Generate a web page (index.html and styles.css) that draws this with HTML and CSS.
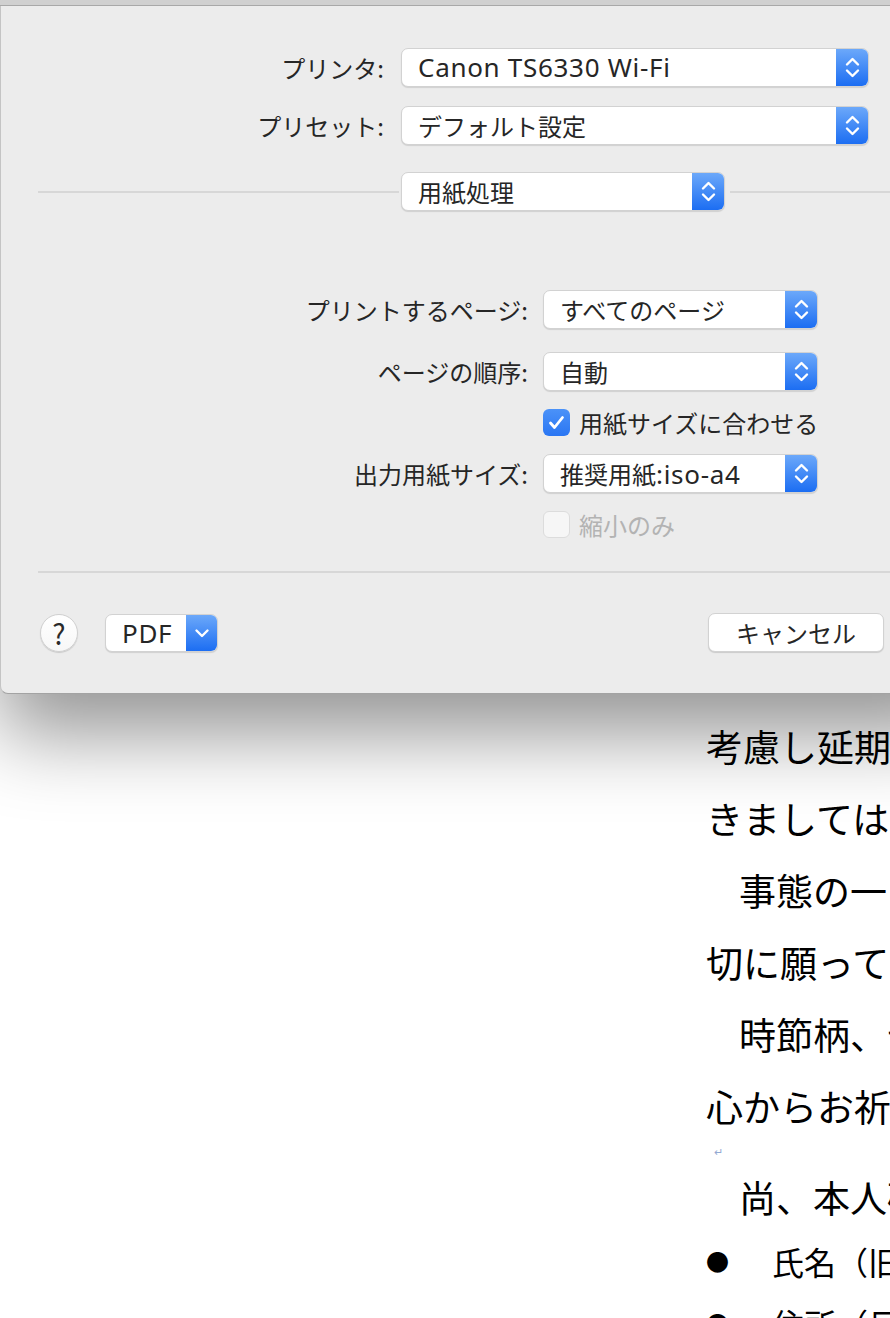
FILE: index.html
```html
<!DOCTYPE html>
<html lang="ja">
<head>
<meta charset="utf-8">
<title>プリント</title>
<link rel="stylesheet" href="styles.css">
</head>
<body>
<div class="topbar"></div>
<div class="sheet">
  <div class="grid top-grid">
    <div class="lbl">プリンタ:</div>
    <div class="popup"><span class="val lat">Canon TS6330 Wi-Fi</span><span class="arrows"><svg width="33" height="39" viewBox="0 0 33 39"><path d="M11 16.5 L16.5 11 L22 16.5 M11 22.5 L16.5 28 L22 22.5" fill="none" stroke="#fff" stroke-width="2.4" stroke-linecap="round" stroke-linejoin="round"/></svg></span></div>
    <div class="lbl">プリセット:</div>
    <div class="popup"><span class="val">デフォルト設定</span><span class="arrows"><svg width="33" height="39" viewBox="0 0 33 39"><path d="M11 16.5 L16.5 11 L22 16.5 M11 22.5 L16.5 28 L22 22.5" fill="none" stroke="#fff" stroke-width="2.4" stroke-linecap="round" stroke-linejoin="round"/></svg></span></div>
  </div>
  <div class="divider-row">
    <div class="line left"></div>
    <div class="popup mid"><span class="val">用紙処理</span><span class="arrows"><svg width="33" height="39" viewBox="0 0 33 39"><path d="M11 16.5 L16.5 11 L22 16.5 M11 22.5 L16.5 28 L22 22.5" fill="none" stroke="#fff" stroke-width="2.4" stroke-linecap="round" stroke-linejoin="round"/></svg></span></div>
    <div class="line right"></div>
  </div>
  <div class="grid opt-grid">
    <div class="lbl">プリントするページ:</div>
    <div class="popup"><span class="val">すべてのページ</span><span class="arrows"><svg width="33" height="39" viewBox="0 0 33 39"><path d="M11 16.5 L16.5 11 L22 16.5 M11 22.5 L16.5 28 L22 22.5" fill="none" stroke="#fff" stroke-width="2.4" stroke-linecap="round" stroke-linejoin="round"/></svg></span></div>
    <div class="lbl r2">ページの順序:</div>
    <div class="popup r2"><span class="val">自動</span><span class="arrows"><svg width="33" height="39" viewBox="0 0 33 39"><path d="M11 16.5 L16.5 11 L22 16.5 M11 22.5 L16.5 28 L22 22.5" fill="none" stroke="#fff" stroke-width="2.4" stroke-linecap="round" stroke-linejoin="round"/></svg></span></div>
    <div class="empty"></div>
    <div class="check-row"><span class="box checked"><svg width="27" height="27" viewBox="0 0 27 27"><path d="M7.5 14 L11.5 18.5 L19.5 8.5" fill="none" stroke="#fff" stroke-width="2.8" stroke-linecap="round" stroke-linejoin="round"/></svg></span><span class="ck-label">用紙サイズに合わせる</span></div>
    <div class="lbl">出力用紙サイズ:</div>
    <div class="popup"><span class="val">推奨用紙<span class="lat">:iso-a4</span></span><span class="arrows"><svg width="33" height="39" viewBox="0 0 33 39"><path d="M11 16.5 L16.5 11 L22 16.5 M11 22.5 L16.5 28 L22 22.5" fill="none" stroke="#fff" stroke-width="2.4" stroke-linecap="round" stroke-linejoin="round"/></svg></span></div>
    <div class="empty"></div>
    <div class="check-row disabled"><span class="box"></span><span class="ck-label">縮小のみ</span></div>
  </div>
  <div class="sep"></div>
  <div class="footer">
    <div class="help">?</div>
    <div class="pdf"><span class="pdf-text lat">PDF</span><span class="pdf-arrow"><svg width="32" height="38" viewBox="0 0 32 38"><path d="M10.5 16.5 L16 22 L21.5 16.5" fill="none" stroke="#fff" stroke-width="2.4" stroke-linecap="round" stroke-linejoin="round"/></svg></span></div>
    <div class="btn cancel">キャンセル</div>
  </div>
</div>
<div class="doc">
  <div class="ln">考慮し延期</div>
  <div class="ln">きましては</div>
  <div class="ln ind">事態の一</div>
  <div class="ln">切に願って</div>
  <div class="ln ind">時節柄、皆</div>
  <div class="ln">心からお祈</div>
  <div class="ln ret">↵</div>
  <div class="ln ind l8">尚、本人確</div>
  <div class="ln bul"><span class="dot">●</span>氏名（旧</div>
  <div class="ln bul"><span class="dot">●</span>住所（日</div>
</div>
</body>
</html>
```

FILE: styles.css
```css
* { box-sizing: border-box; }
html, body { margin: 0; padding: 0; }
body {
  width: 890px;
  height: 1318px;
  overflow: hidden;
  background: #ffffff;
  font-family: "Noto Sans CJK JP", sans-serif;
  color: #262626;
}
.topbar {
  height: 6px;
  background: #d0d0d0;
  border-bottom: 1px solid #a8a8a8;
  position: relative;
  z-index: 2;
}
.sheet {
  width: 960px;
  background: #ececec;
  border-bottom: 1px solid #a3a3a3;
  border-left: 1px solid #c4c4c4;
  border-bottom-left-radius: 8px;
  box-shadow: 0 40px 80px rgba(0, 0, 0, 0.42);
  padding-top: 42px;
  padding-bottom: 41px;
  font-size: 24px;
}
.grid { display: grid; align-items: center; }
.top-grid {
  grid-template-columns: 383px 468px;
  column-gap: 17px;
  row-gap: 19px;
}
.opt-grid {
  margin-top: 79px;
  grid-template-columns: 527px 275px;
  column-gap: 15px;
  row-gap: 18px;
}
.opt-grid .r2 { margin-top: 5px; }
.lbl { text-align: right; white-space: nowrap; line-height: 39px; }
.popup {
  height: 39px;
  display: flex;
  align-items: stretch;
  background: #ffffff;
  border: 1px solid #d2d2d2;
  border-radius: 7px;
  box-shadow: 0 1px 1px rgba(0, 0, 0, 0.12);
  overflow: hidden;
}
.popup .val {
  flex: 1;
  padding-left: 16px;
  line-height: 37px;
  white-space: nowrap;
}
.arrows {
  width: 33px;
  margin: -1px -1px -1px 0;
  background: linear-gradient(#6eaafa, #1a6cf2);
  display: flex;
  align-items: center;
  justify-content: center;
}
.lat {
  font-family: "Noto Sans", "Noto Sans CJK JP", sans-serif;
  font-size: 26px;
  letter-spacing: 0.7px;
}
.divider-row {
  margin-top: 27px;
  display: flex;
  align-items: center;
}
.line { height: 2px; background: #d7d7d7; }
.line.left { margin-left: 37px; width: 361px; }
.popup.mid { width: 324px; margin-left: 2px; }
.line.right { flex: 1; margin-left: 5px; }
.check-row {
  display: flex;
  align-items: center;
  height: 27px;
}
.box {
  width: 27px;
  height: 27px;
  border-radius: 6px;
  background: #f6f6f6;
  border: 1px solid #dcdcdc;
  display: flex;
}
.box.checked {
  background: linear-gradient(#4b92f8, #2a76f3);
  border: none;
}
.ck-label { margin-left: 9px; white-space: nowrap; line-height: 27px; }
.disabled .ck-label { color: #b3b3b3; }
.sep {
  margin-top: 33px;
  margin-left: 37px;
  height: 2px;
  background: #d7d7d7;
}
.footer {
  margin-top: 40px;
  padding-left: 39px;
  display: flex;
  align-items: center;
}
.help {
  width: 38px;
  height: 38px;
  border-radius: 50%;
  background: linear-gradient(#ffffff, #f7f7f7);
  border: 1px solid #d0d0d0;
  box-shadow: 0 1px 1px rgba(0, 0, 0, 0.15);
  text-align: center;
  line-height: 36px;
  font-size: 28px;
  color: #2a2a2a;
}
.pdf {
  margin-left: 27px;
  width: 113px;
  height: 38px;
  display: flex;
  background: #ffffff;
  border: 1px solid #d2d2d2;
  border-radius: 7px;
  box-shadow: 0 1px 1px rgba(0, 0, 0, 0.12);
  overflow: hidden;
}
.pdf-text { flex: 1; padding-left: 16px; line-height: 36px; }
.pdf-arrow {
  width: 32px;
  margin: -1px -1px -1px 0;
  background: linear-gradient(#6eaafa, #1a6cf2);
  display: flex;
  align-items: center;
  justify-content: center;
}
.btn {
  height: 39px;
  background: #ffffff;
  border: 1px solid #d2d2d2;
  border-radius: 7px;
  box-shadow: 0 1px 1px rgba(0, 0, 0, 0.14);
  text-align: center;
  line-height: 37px;
}
.cancel { margin-left: 490px; width: 176px; }
.doc {
  padding-top: 16px;
  padding-left: 706px;
  font-size: 37px;
  color: #000000;
}
.ln { height: 72px; line-height: 72px; white-space: nowrap; }
.ln.ind { padding-left: 33px; }
.ln.ret { height: 19px; line-height: 19px; font-size: 11px; color: #93a9d2; padding-left: 8px; }
.ln.l8 { height: 64px; }
.ln.bul { height: 62px; font-size: 32px; }
.dot { display: inline-block; width: 66px; font-size: 23px; vertical-align: top; }
```
